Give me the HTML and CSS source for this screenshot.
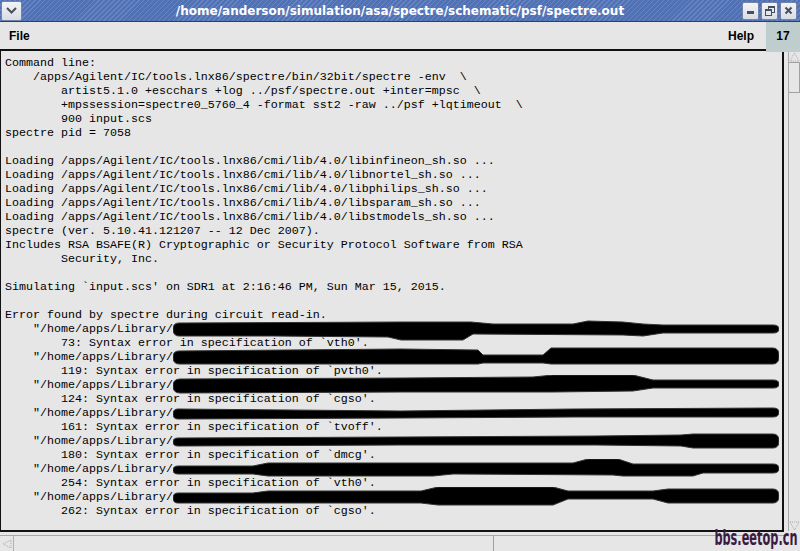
FILE: index.html
```html
<!DOCTYPE html>
<html lang="en">
<head>
    <meta charset="UTF-8">
    <title>spectre.out</title>
    <link rel="stylesheet" href="styles.css">
</head>
<body>
    <div class="window">
        <div class="titlebar">
            <div class="title-left">
                <span class="tbtn menu-btn">
                    <svg width="11" height="7" viewBox="0 0 11 7"><path d="M1 1 L5.5 5.5 L10 1" fill="none" stroke="#45505f" stroke-width="2"/></svg>
                </span>
            </div>
            <div class="title">/home/anderson/simulation/asa/spectre/schematic/psf/spectre.out</div>
            <div class="controls">
                <span class="tbtn">
                    <svg width="9" height="9" viewBox="0 0 9 9"><rect x="1" y="5" width="7" height="3" fill="#45505f"/></svg>
                </span>
                <span class="tbtn">
                    <svg width="10" height="10" viewBox="0 0 10 10"><rect x="3.5" y="0.5" width="6" height="6" fill="none" stroke="#45505f"/><rect x="3.5" y="0.5" width="6" height="1.5" fill="#45505f"/><rect x="0.5" y="3.5" width="6" height="6" fill="#e3e5ec" stroke="#45505f"/><rect x="0.5" y="3.5" width="6" height="1.5" fill="#45505f"/></svg>
                </span>
                <span class="tbtn">
                    <svg width="9" height="9" viewBox="0 0 9 9"><path d="M1.5 1.5 L7.5 7.5 M7.5 1.5 L1.5 7.5" stroke="#45505f" stroke-width="2"/></svg>
                </span>
            </div>
        </div>

        <div class="menubar">
            <span class="menu">File</span>
            <span class="menu help">Help</span>
            <span class="counter">17</span>
        </div>

        <div class="log-row">
            <div class="log-frame">
<pre class="log">Command line:
    /apps/Agilent/IC/tools.lnx86/spectre/bin/32bit/spectre -env  \
        artist5.1.0 +escchars +log ../psf/spectre.out +inter=mpsc  \
        +mpssession=spectre0_5760_4 -format sst2 -raw ../psf +lqtimeout  \
        900 input.scs
spectre pid = 7058

Loading /apps/Agilent/IC/tools.lnx86/cmi/lib/4.0/libinfineon_sh.so ...
Loading /apps/Agilent/IC/tools.lnx86/cmi/lib/4.0/libnortel_sh.so ...
Loading /apps/Agilent/IC/tools.lnx86/cmi/lib/4.0/libphilips_sh.so ...
Loading /apps/Agilent/IC/tools.lnx86/cmi/lib/4.0/libsparam_sh.so ...
Loading /apps/Agilent/IC/tools.lnx86/cmi/lib/4.0/libstmodels_sh.so ...
spectre (ver. 5.10.41.121207 -- 12 Dec 2007).
Includes RSA BSAFE(R) Cryptographic or Security Protocol Software from RSA
        Security, Inc.

Simulating `input.scs' on SDR1 at 2:16:46 PM, Sun Mar 15, 2015.

Error found by spectre during circuit read-in.
    "/home/apps/Library/<svg class="ink" viewBox="0 0 606 22"><path d="M0,10 Q0,4 6,4 L228,3 L298,3 L320,5 L400,5 L415,2 L450,3 L470,5 L490,6 L600,6 Q606,6 606,10 Q606,14 600,14 L490,14 L470,17 L450,16 L300,15 L290,21 L228,21 L215,18 L100,17 L6,17 Q0,17 0,10 Z"/></svg>
        73: Syntax error in specification of `vth0'.
    "/home/apps/Library/<svg class="ink" viewBox="0 0 606 22"><path d="M0,10 Q0,4 6,4 L228,2 L305,3 L310,8 L370,8 L378,1 L600,1 Q606,1 606,9 Q606,17 600,17 L378,17 L370,16 L310,16 L305,17 L6,17 Q0,17 0,10 Z"/></svg>
        119: Syntax error in specification of `pvth0'.
    "/home/apps/Library/<svg class="ink" viewBox="0 0 606 22"><path d="M0,11 Q0,4 7,4 L230,3 L360,2 L380,0 L460,0 L480,5 L600,5 Q606,5 606,9 Q606,13 600,13 L480,13 L460,16 L380,17 L360,17 L230,17 L7,18 Q0,18 0,11 Z"/></svg>
        124: Syntax error in specification of `cgso'.
    "/home/apps/Library/<svg class="ink" viewBox="0 0 606 22"><path d="M0,11 Q0,6 5,6 L228,8 L400,6 L600,5 Q606,5 606,9 Q606,14 600,14 L400,14 L228,15 L5,16 Q0,16 0,11 Z"/></svg>
        161: Syntax error in specification of `tvoff'.
    "/home/apps/Library/<svg class="ink" viewBox="0 0 606 22"><path d="M0,11 Q0,7 5,7 L228,6 L423,5 L508,4 L520,3 L600,3 Q606,3 606,10 Q606,17 600,17 L520,17 L508,15 L423,14 L228,14 L5,15 Q0,15 0,11 Z"/></svg>
        180: Syntax error in specification of `dmcg'.
    "/home/apps/Library/<svg class="ink" viewBox="0 0 606 22"><path d="M0,11 Q0,7 5,7 L80,7 L95,4 L400,4 L415,0 L445,0 L460,5 L600,5 Q606,5 606,9.5 Q606,14 600,14 L530,14 L520,17 L450,17 L440,16 L280,15 L260,17 L95,17 L80,15 L5,15 Q0,15 0,11 Z"/></svg>
        254: Syntax error in specification of `vth0'.
    "/home/apps/Library/<svg class="ink" viewBox="0 0 606 22"><path d="M0,11 Q0,6 5,6 L80,6 L95,4 L248,4 L265,0 L380,0 L395,4 L480,4 L495,2 L600,2 Q606,2 606,9 Q606,16 600,16 L495,16 L480,12 L395,12 L380,18 L265,18 L248,16 L5,16 Q0,16 0,11 Z"/></svg>
        262: Syntax error in specification of `cgso'.</pre>
            </div>
            <div class="vscroll">
                <div class="arrow">
                    <svg width="11" height="10" viewBox="0 0 11 10"><path d="M5.5 1 L10 9 L1 9 Z" fill="none" stroke="#a8a8a8" stroke-dasharray="1 1"/></svg>
                </div>
                <div class="vthumb"></div>
                <div class="track"></div>
                <div class="arrow">
                    <svg width="11" height="10" viewBox="0 0 11 10"><path d="M1 1 L10 1 L5.5 9 Z" fill="none" stroke="#a8a8a8" stroke-dasharray="1 1"/></svg>
                </div>
            </div>
        </div>

        <div class="hscroll">
            <div class="harrow">
                <svg width="10" height="10" viewBox="0 0 10 10"><path d="M1 5 L9 1 L9 9 Z" fill="none" stroke="#a8a8a8" stroke-dasharray="1 1"/></svg>
            </div>
            <div class="hthumb"></div>
            <div class="htrack"></div>
        </div>

        <div class="edge"><div class="edge-line"></div></div>

        <div class="watermark">bbs.eetop.cn</div>
    </div>
</body>
</html>
```

FILE: styles.css
```css
* {
    box-sizing: border-box;
}

body {
    margin: 0;
    background-color: #e6e6e6;
    font-family: "Liberation Sans", Arial, sans-serif;
}

.window {
    position: relative;
    width: 800px;
    height: 551px;
    display: flex;
    flex-direction: column;
    overflow: hidden;
    background-color: #e6e6e6;
}

/* title bar */
.titlebar {
    height: 22px;
    flex: none;
    display: grid;
    grid-template-columns: 60px 1fr 60px;
    align-items: center;
    background: repeating-linear-gradient(135deg, #6685c2 0 1px, #5071b3 1px 3.5px);
    border-bottom: 1px solid #2a3f70;
}

.title {
    text-align: center;
    color: #fff;
    font-family: "DejaVu Sans", sans-serif;
    font-weight: bold;
    font-size: 12px;
    white-space: nowrap;
}

.title-left {
    padding-left: 1px;
}

.controls {
    display: flex;
    gap: 2px;
    justify-content: flex-end;
    padding-right: 3px;
}

.tbtn {
    width: 17px;
    height: 18px;
    display: flex;
    align-items: center;
    justify-content: center;
    border: 1px solid #7484a8;
    border-radius: 2px;
    background: linear-gradient(#f3f4f7, #d9dce4);
}

.menu-btn {
    width: 21px;
    height: 20px;
}

/* menu bar */
.menubar {
    height: 27px;
    flex: none;
    display: flex;
    align-items: center;
    padding-left: 9px;
    font-size: 12px;
    font-weight: bold;
    color: #000;
}

.help {
    margin-left: auto;
    margin-right: 12px;
}

.counter {
    position: relative;
    z-index: 1;
    align-self: flex-start;
    width: 34px;
    height: 30px;
    margin-bottom: -3px;
    display: flex;
    align-items: center;
    justify-content: center;
    padding-bottom: 3px;
    background-color: #bfcecc;
}

/* log output */
.log-row {
    height: 483px;
    flex: none;
    display: flex;
}

.log-frame {
    width: 784px;
    flex: none;
    border: 2px solid #111;
    border-left-width: 1px;
    overflow: hidden;
}

.log {
    margin: 0;
    padding: 5px 0 0 4px;
    font-family: "Liberation Mono", "Courier New", monospace;
    font-size: 11.667px;
    line-height: 14px;
    color: #000;
    white-space: pre;
}

.ink {
    width: 606px;
    height: 22px;
    vertical-align: top;
    margin: -3px 0 -5px;
    fill: #000;
    stroke: #333;
    stroke-width: 1;
    stroke-linejoin: round;
}

.vscroll {
    width: 12px;
    margin: 3px 0 1px 4px;
    display: flex;
    flex-direction: column;
    border-left: 1px solid #a8a8a8;
}

.arrow {
    height: 10px;
    display: flex;
    align-items: center;
    justify-content: center;
}

.vthumb {
    height: 31px;
    border: 1px solid #a0a0a0;
    border-left: none;
}

.track {
    flex: 1;
}

.hscroll {
    height: 16px;
    flex: none;
    display: flex;
    margin-top: 3px;
    border-top: 1px solid #a8a8a8;
    width: 786px;
}

.harrow {
    width: 13px;
    display: flex;
    align-items: center;
    justify-content: center;
}

.hthumb {
    width: 481px;
    border-left: 1px solid #b0b0b0;
    border-right: 1px solid #a0a0a0;
}

.htrack {
    flex: 1;
}

.edge {
    height: 3px;
    flex: none;
    padding-top: 1px;
}

.edge-line {
    width: 688px;
    height: 2px;
    background-color: #4c4c4c;
}

.watermark {
    position: absolute;
    right: 3px;
    bottom: 2px;
    font-family: "DejaVu Sans Condensed", "Liberation Sans", sans-serif;
    font-weight: bold;
    font-size: 21px;
    line-height: 21px;
    white-space: nowrap;
    color: #3a1a42;
    transform: scaleX(0.6);
    transform-origin: right bottom;
}
```
